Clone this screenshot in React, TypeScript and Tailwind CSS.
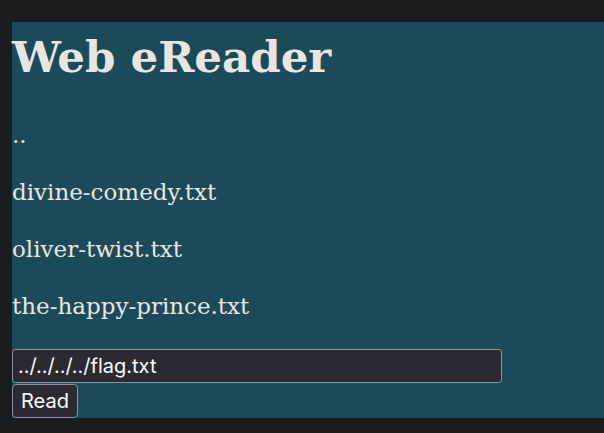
export default function App() {
  const files = ['..', 'divine-comedy.txt', 'oliver-twist.txt', 'the-happy-prince.txt'];
  return (
    <div className="h-[433px] w-[604px] bg-[#1b1c1e] pt-[22px] pl-[12px] pb-[15px]">
      <div className="h-[396px] bg-[#1c4a59] text-[#e8e6e3] font-['DejaVu_Serif',serif]">
        <h1 className="pt-[8px] text-[43.5px] leading-[54px] font-bold">Web eReader</h1>
        <div className="mt-[38px] flex flex-col gap-[30px] text-[23px] leading-[27px]">
          {files.map((f) => (
            <p key={f}>{f}</p>
          ))}
        </div>
        <form className="mt-[29px] flex flex-col items-start gap-[1px] font-['Inter',sans-serif]">
          <input
            defaultValue="../../../../flag.txt"
            className="h-[34px] w-[490px] rounded-[3px] border border-[#8f8f9d] bg-[#2b2a33] px-[5px] text-[20px] text-[#fbfbfe] outline-none"
          />
          <button
            type="button"
            className="h-[34px] rounded-[4px] border border-[#8f8f9d] bg-[#2b2a33] px-[8px] text-[20px] text-[#fbfbfe]"
          >
            Read
          </button>
        </form>
      </div>
    </div>
  );
}
